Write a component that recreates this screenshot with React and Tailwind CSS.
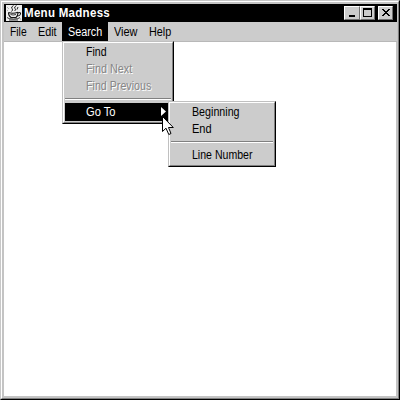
import React from "react";

// Condensed label: the text keeps its height while its width is scaled.
function Label({ text, k, className = "" }) {
  return (
    <span
      className={"block origin-left whitespace-nowrap text-[12px] leading-[16px] " + className}
      style={{ transform: `scaleX(${k})` }}
    >
      {text}
    </span>
  );
}

function Panel({ className, children }) {
  return (
    <div className={"absolute border border-t-[#c0c0c0] border-l-[#c0c0c0] border-r-black border-b-black bg-[#cccccc] " + className}>
      <div className="flex h-full flex-col border border-t-white border-l-white border-r-[#808080] border-b-[#808080] p-px">
        {children}
      </div>
    </div>
  );
}

function Separator({ className }) {
  return <div className={"h-[2px] shrink-0 border-t border-b border-t-[#808080] border-b-white " + className} />;
}

function TitleButton({ className = "", children }) {
  return (
    <div className={"h-[14px] border border-t-white border-l-white border-r-[#707070] border-b-[#707070] bg-[#cccccc] " + className}>
      <svg width="13" height="12" viewBox="0 0 13 12" shapeRendering="crispEdges" className="block">
        {children}
      </svg>
    </div>
  );
}

function JavaCup() {
  return (
    <svg width="16" height="16" viewBox="0 0 16 16" className="block bg-[#eeeeee]" fill="none" stroke="#111">
      <path d="M7.5 0.5Q4.5 2 6 3.5T5.5 6.5M10.5 0.5Q7.5 2 9 3.5T8.5 6M12 2L11 4.5" strokeWidth="0.9" />
      <path d="M2.5 7.5Q7 9 12 7.2M2.5 7.5Q2.5 11 5 12.5H10Q12 11 12 7.2M12 8Q15 6.8 14.5 9T11 11" strokeWidth="1.1" />
      <path d="M4.5 9.5Q7 10.5 10 9.5M1 12.5Q2 14 7.5 14T14 12.5M3 15H12" strokeWidth="0.8" />
      <path d="M1 2L3 4M1 5L2 6M14 13L15 15" stroke="#999" strokeWidth="0.7" />
    </svg>
  );
}

export default function App() {
  const disabled = "text-[#868686] [text-shadow:1px_1px_0_#fff]";
  return (
    <div className="h-[405px] w-[405px] overflow-hidden bg-white font-['Liberation_Sans',Arial,sans-serif] text-black">
      <div className="relative h-[400px] w-[400px] border border-t-[#c8c8c8] border-l-[#c8c8c8] border-r-black border-b-black">
        <div className="flex h-full flex-col border border-t-white border-l-white border-r-[#808080] border-b-[#808080] bg-[#c4c4c4] p-[2px] pr-px pb-px">
          <div className="flex h-[18px] shrink-0 items-center bg-black pr-[4px] pl-[2px] text-white">
            <JavaCup />
            <div className="ml-[2px] flex-1">
              <Label text="Menu Madness" k={0.96} className="font-bold tracking-[0.3px]" />
            </div>
            <div className="flex">
              <TitleButton className="w-[16px]"><path d="M4 8h6v2H4z" fill="#000" /></TitleButton>
              <TitleButton className="w-[15px]"><path d="M2 1h9v9H2zM3 3v6h7V3z" fill="#000" fillRule="evenodd" /></TitleButton>
              <TitleButton className="ml-[3px] w-[15px]">
                <path d="M3 2h2v1h1v1h2V3h1V2h2v1h-1v1H9v1H8v1h1v1h1v1h1v1H9V8H8V7H6v1H5v1H3V8h1V7h1V6h1V5H5V4H4V3H3z" fill="#000" />
              </TitleButton>
            </div>
          </div>
          <div className="flex h-[20px] shrink-0 border-b border-[#b8b8b8] bg-[#cccccc]">
            <div className="w-[28px] pt-[2px] pl-[6px]"><Label text="File" k={0.86} /></div>
            <div className="w-[30px] pt-[2px] pl-[6px]"><Label text="Edit" k={0.9} /></div>
            <div className="h-[19px] w-[46px] bg-black pt-[2px] pl-[6px] text-white"><Label text="Search" k={0.9} /></div>
            <div className="w-[35px] pt-[2px] pl-[6px]"><Label text="View" k={0.91} /></div>
            <div className="w-[35px] pt-[2px] pl-[6px]"><Label text="Help" k={0.9} /></div>
          </div>
          <div className="mr-px mb-px flex-1 bg-white" />
        </div>

        <Panel className="top-[40px] left-[61px] h-[83px] w-[112px]">
          <div className="h-[17px] shrink-0 pl-[21px]"><Label text="Find" k={0.88} /></div>
          <div className="h-[17px] shrink-0 pl-[21px]"><Label text="Find Next" k={0.9} className={disabled} /></div>
          <div className="h-[17px] shrink-0 pl-[21px]"><Label text="Find Previous" k={0.89} className={disabled} /></div>
          <Separator className="mt-[3px]" />
          <div className="mt-[3px] flex h-[18px] shrink-0 items-center justify-between bg-black pr-[5px] pl-[21px] text-white">
            <Label text="Go To" k={0.93} />
            <svg width="5" height="9" viewBox="0 0 5 9" className="-mt-px"><path d="M0 0L5 4.5L0 9z" fill="#fff" /></svg>
          </div>
        </Panel>

        <Panel className="top-[100px] left-[167px] h-[66px] w-[108px]">
          <div className="h-[17px] shrink-0 pl-[21px]"><Label text="Beginning" k={0.89} /></div>
          <div className="h-[17px] shrink-0 pl-[21px]"><Label text="End" k={0.92} /></div>
          <Separator className="mt-[3px]" />
          <div className="mt-[4px] h-[17px] shrink-0 pl-[21px]"><Label text="Line Number" k={0.88} /></div>
        </Panel>

        <svg className="absolute top-[115px] left-[161px]" width="12" height="20" viewBox="0 0 12 20">
          <path d="M0.5 0.5V15.5L4 12.2L6.8 18.5L9 17.5L6.5 11.5H11.3z" fill="#fff" stroke="#000" strokeWidth="1" />
        </svg>
      </div>
    </div>
  );
}
